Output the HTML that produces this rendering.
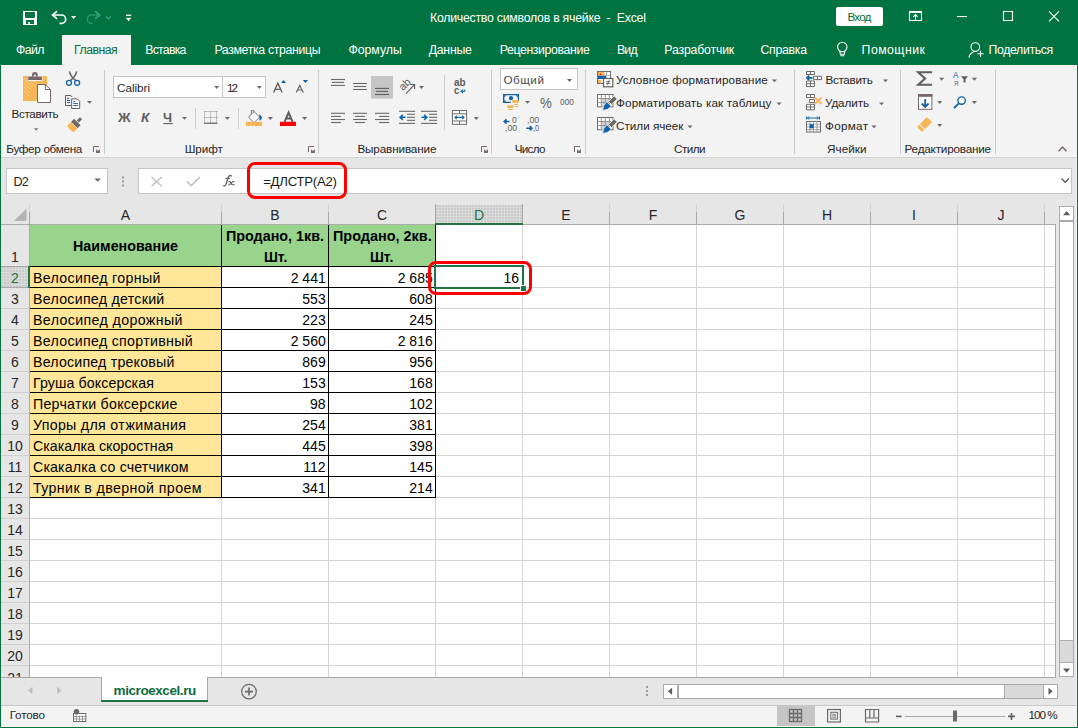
<!DOCTYPE html>
<html><head><meta charset="utf-8"><style>
html,body{margin:0;padding:0;}
body{width:1078px;height:728px;overflow:hidden;position:relative;background:#fff;font-family:"Liberation Sans",sans-serif;}
.a{position:absolute;}
.t{position:absolute;white-space:nowrap;transform-origin:0 0;}
</style></head><body>
<div class="a" style="left:0px;top:0px;width:1078px;height:65px;background:#007340"></div>
<div class="t" style="left:430.00px;top:11.85px;font-size:12.3px;line-height:12.3px;color:#fff;letter-spacing:-0.243px;">Количество символов в ячейке  -  Excel</div>
<div class="a" style="left:836px;top:7px;width:47px;height:19px;background:#fff;border-radius:2px"></div>
<div class="t" style="left:847.50px;top:10.65px;font-size:11.7px;line-height:11.7px;color:#007340;letter-spacing:-0.833px;">Вход</div>
<div class="a" style="left:62px;top:35px;width:69px;height:30px;background:#F3F3F3"></div>
<div class="t" style="left:16.00px;top:43.85px;font-size:12.3px;line-height:12.3px;color:#fff;letter-spacing:-0.617px;">Файл</div>
<div class="t" style="left:74.10px;top:43.85px;font-size:12.3px;line-height:12.3px;color:#0B6B3A;letter-spacing:-0.542px;">Главная</div>
<div class="t" style="left:145.30px;top:43.85px;font-size:12.3px;line-height:12.3px;color:#fff;letter-spacing:-0.775px;">Вставка</div>
<div class="t" style="left:214.40px;top:43.85px;font-size:12.3px;line-height:12.3px;color:#fff;letter-spacing:-0.339px;">Разметка страницы</div>
<div class="t" style="left:348.40px;top:43.85px;font-size:12.3px;line-height:12.3px;color:#fff;letter-spacing:-0.017px;">Формулы</div>
<div class="t" style="left:428.70px;top:43.85px;font-size:12.3px;line-height:12.3px;color:#fff;letter-spacing:-0.255px;">Данные</div>
<div class="t" style="left:499.70px;top:43.85px;font-size:12.3px;line-height:12.3px;color:#fff;letter-spacing:-0.377px;">Рецензирование</div>
<div class="t" style="left:616.90px;top:43.85px;font-size:12.3px;line-height:12.3px;color:#fff;letter-spacing:-0.725px;">Вид</div>
<div class="t" style="left:664.30px;top:43.85px;font-size:12.3px;line-height:12.3px;color:#fff;letter-spacing:-0.177px;">Разработчик</div>
<div class="t" style="left:760.50px;top:43.85px;font-size:12.3px;line-height:12.3px;color:#fff;letter-spacing:-0.275px;">Справка</div>
<div class="t" style="left:861.60px;top:43.85px;font-size:12.3px;line-height:12.3px;color:#fff;letter-spacing:0.450px;">Помощник</div>
<div class="t" style="left:988.50px;top:43.85px;font-size:12.3px;line-height:12.3px;color:#fff;letter-spacing:-0.353px;">Поделиться</div>
<svg class="a" style="left:0px;top:0px" width="1078" height="65" viewBox="0 0 1078 65">
<rect x="23" y="11" width="14" height="14" fill="#fff"/>
<path d="M25 12H35V17.2L34.2 18H25.8L25 17.2Z" fill="#007340"/>
<path d="M26 20H34V24H30V22H28.2V24H26Z" fill="#007340"/>
<path d="M57 11.2L52.6 15L57 18.8" stroke="#fff" stroke-width="1.7" fill="none"/>
<path d="M53.2 15H61.5A4.2 4.2 0 0 1 61.5 23.4H59.5" stroke="#fff" stroke-width="1.7" fill="none"/>
<path d="M71 16H76.2L73.6 19Z" fill="#fff"/>
<path d="M95 11.2L99.8 15L95 18.8" stroke="#36A27D" stroke-width="1.6" fill="none"/>
<path d="M99.4 15H91.5A4.2 4.2 0 0 0 91.5 23.4H93" stroke="#36A27D" stroke-width="1.5" fill="none" stroke-dasharray="1.6 0.6"/>
<path d="M106 16.5L108.5 18.8L111 16.3" stroke="#3FA683" stroke-width="1.1" fill="none"/>
<rect x="126" y="14.6" width="5.2" height="1.4" fill="#fff"/>
<path d="M125.8 17.8H131.4L128.6 21.2Z" fill="#fff"/>
<rect x="909.5" y="11.5" width="12" height="9" fill="none" stroke="#fff" stroke-width="1.1"/>
<rect x="909" y="11" width="13" height="2" fill="#fff"/>
<path d="M915.5 20.5V14.8M913.3 16.8L915.5 14.6L917.7 16.8" stroke="#fff" stroke-width="1.1" fill="none"/>
<rect x="957" y="16" width="10" height="1.1" fill="#fff"/>
<rect x="1003.5" y="11.5" width="9" height="9" fill="none" stroke="#fff" stroke-width="1.1"/>
<path d="M1049 11.3L1059 21.3M1059 11.3L1049 21.3" stroke="#fff" stroke-width="1.1" fill="none"/>
<circle cx="842.3" cy="47" r="4.7" fill="none" stroke="#fff" stroke-width="1.1"/>
<path d="M839.8 50.8L840.3 54.3H844.3L844.8 50.8M840.3 55.8H844.3" stroke="#fff" stroke-width="1.1" fill="none"/>
<circle cx="975.3" cy="47" r="4.3" fill="none" stroke="#fff" stroke-width="1.1"/>
<path d="M969 57.5A6.8 6.8 0 0 1 976.5 51.5" stroke="#fff" stroke-width="1.1" fill="none"/>
<path d="M977.4 53.8H983.7M980.5 50.8V57" stroke="#fff" stroke-width="1.1" fill="none"/>
</svg>
<div class="a" style="left:1px;top:65px;width:1075px;height:92px;background:#F3F3F3"></div>
<div class="a" style="left:1px;top:156px;width:1075px;height:1px;background:#F7F7F7"></div>
<div class="a" style="left:104px;top:70px;width:1px;height:84px;background:#C8C8C8"></div>
<div class="a" style="left:318px;top:70px;width:1px;height:84px;background:#C8C8C8"></div>
<div class="a" style="left:491px;top:70px;width:1px;height:84px;background:#C8C8C8"></div>
<div class="a" style="left:585px;top:70px;width:1px;height:84px;background:#C8C8C8"></div>
<div class="a" style="left:794px;top:70px;width:1px;height:84px;background:#C8C8C8"></div>
<div class="a" style="left:900px;top:70px;width:1px;height:84px;background:#C8C8C8"></div>
<div class="a" style="left:995px;top:70px;width:1px;height:84px;background:#C8C8C8"></div>
<div class="t" style="left:6.30px;top:142.65px;font-size:11.7px;line-height:11.7px;color:#262626;letter-spacing:-0.311px;">Буфер обмена</div>
<div class="t" style="left:184.70px;top:142.65px;font-size:11.7px;line-height:11.7px;color:#262626;letter-spacing:-0.050px;">Шрифт</div>
<div class="t" style="left:357.40px;top:142.65px;font-size:11.7px;line-height:11.7px;color:#262626;letter-spacing:-0.127px;">Выравнивание</div>
<div class="t" style="left:514.80px;top:142.65px;font-size:11.7px;line-height:11.7px;color:#262626;letter-spacing:-0.756px;">Число</div>
<div class="t" style="left:674.00px;top:142.65px;font-size:11.7px;line-height:11.7px;color:#262626;letter-spacing:-0.512px;">Стили</div>
<div class="t" style="left:827.00px;top:142.65px;font-size:11.7px;line-height:11.7px;color:#262626;letter-spacing:0.070px;">Ячейки</div>
<div class="t" style="left:904.50px;top:142.65px;font-size:11.7px;line-height:11.7px;color:#262626;letter-spacing:-0.187px;">Редактирование</div>
<div class="t" style="left:11.50px;top:107.65px;font-size:11.7px;line-height:11.7px;color:#262626;letter-spacing:-0.346px;">Вставить</div>
<div class="a" style="left:113px;top:76px;width:110px;height:22px;background:#fff;border:1px solid #C6C6C6;box-sizing:border-box"></div>
<div class="a" style="left:222px;top:76px;width:44px;height:22px;background:#fff;border:1px solid #C6C6C6;box-sizing:border-box"></div>
<div class="t" style="left:117.00px;top:81.65px;font-size:11.7px;line-height:11.7px;color:#262626;letter-spacing:-0.021px;">Calibri</div>
<div class="t" style="left:227.00px;top:81.65px;font-size:11.7px;line-height:11.7px;color:#262626;letter-spacing:-2.000px;">12</div>
<div class="a" style="left:500px;top:68px;width:78px;height:22px;background:#fff;border:1px solid #C6C6C6;box-sizing:border-box"></div>
<div class="t" style="left:616.00px;top:74.15px;font-size:11.7px;line-height:11.7px;color:#262626;letter-spacing:0.142px;">Условное форматирование</div>
<div class="t" style="left:616.00px;top:96.65px;font-size:11.7px;line-height:11.7px;color:#262626;letter-spacing:0.135px;">Форматировать как таблицу</div>
<div class="t" style="left:616.00px;top:120.45px;font-size:11.7px;line-height:11.7px;color:#262626;">Стили ячеек</div>
<div class="t" style="left:825.50px;top:73.65px;font-size:11.7px;line-height:11.7px;color:#262626;letter-spacing:-0.332px;">Вставить</div>
<div class="t" style="left:825.00px;top:96.65px;font-size:11.7px;line-height:11.7px;color:#262626;letter-spacing:-0.104px;">Удалить</div>
<div class="t" style="left:825.00px;top:120.15px;font-size:11.7px;line-height:11.7px;color:#262626;letter-spacing:0.300px;">Формат</div>
<svg class="a" style="left:0px;top:0px" width="1078" height="728" viewBox="0 0 1078 728">
<path d="M23 76H28V81H42.5V76H47V101H23Z" fill="#F8B556"/>
<path d="M24 83L30 89M24 87L30 93M24 91L30 97M26 81L32 87M30 81L36 87M34 81L37 84M24 79L27 82" stroke="#FBD68E" stroke-width="0.9" fill="none" opacity="0.8"/>
<path d="M28.2 76.5H41.9V80H28.2Z" fill="#76676B"/>
<path d="M32 76.6V75A2.9 2.9 0 0 1 37.8 75V76.6Z" fill="#76676B"/>
<circle cx="34.9" cy="75.6" r="1" fill="#F3F3F3"/>
<path d="M37.5 84.5H45.3L50.5 89.5V102.5H37.5Z" fill="#fff" stroke="#76676B" stroke-width="1"/>
<path d="M45.3 84.5V89.5H50.5" fill="none" stroke="#76676B" stroke-width="1"/>
<path d="M69.4 71.4Q70.2 76 75.8 80.6M76.7 71.4Q75.9 76 70.3 80.6" stroke="#6A6A6A" stroke-width="1.6" fill="none"/>
<circle cx="69" cy="82.8" r="2.5" fill="none" stroke="#1062A6" stroke-width="1.3"/>
<circle cx="77.1" cy="82.8" r="2.5" fill="none" stroke="#1062A6" stroke-width="1.3"/>
<path d="M65.5 95.5H70.8L72.2 97" fill="none" stroke="#5F5F5F" stroke-width="1"/>
<path d="M65.5 95.5V105.5H71.2" fill="none" stroke="#5F5F5F" stroke-width="1"/>
<path d="M71.7 98.8H77.2L79.7 101.3V108.5H71.7Z" fill="#fff" stroke="#5F5F5F" stroke-width="1"/>
<path d="M67 98.4H69.2M67 100.5H70M67 102.6H70M73.3 101.6H75.3M73.3 103.6H78M73.3 105.6H78" stroke="#1F5F9F" stroke-width="1" fill="none"/>
<path d="M86.9 101H92L89.45 103.8Z" fill="#6A6A6A"/>
<g transform="translate(75 124.3) rotate(45)">
<rect x="-1.5" y="-8.5" width="3" height="4.6" fill="#6A6A6A"/>
<rect x="-4.6" y="-3.3" width="9.2" height="4.3" fill="#6A6A6A"/>
<path d="M-4.6 1.2H4.6V6.5Q0 8.2 -4.6 6.5Z" fill="#F8B556"/>
</g>
<path d="M34 128.2H38.2L36.1 130.5Z" fill="#6A6A6A"/>
</svg>
<svg class="a" style="left:0px;top:0px" width="1078" height="728" viewBox="0 0 1078 728"><path d="M214.3 86H219.10000000000002L216.70000000000002 89Z" fill="#6A6A6A"/><path d="M257 86H261.8L259.4 89Z" fill="#6A6A6A"/><path d="M273.6 92.6L277.85 83.2L282.1 92.6M275.3 89.4H280.4" stroke="#5E5E5E" stroke-width="1.3" fill="none"/>
<path d="M281 82.9L283.55 79.9L286.1 82.9Z" fill="#1062A6"/>
<path d="M296.3 92.6L299.75 85.3L303.2 92.6M297.6 90H301.9" stroke="#5E5E5E" stroke-width="1.2" fill="none"/>
<path d="M302.8 79.9H308.1L305.45 83Z" fill="#1062A6"/>
<rect x="163.3" y="123" width="9.5" height="1.1" fill="#5E5E5E"/>
<rect x="195" y="108" width="1" height="21" fill="#D0D0D0"/>
<rect x="238" y="108" width="1" height="21" fill="#D0D0D0"/>
<path d="M204.5 111.5H217.5M204.5 111.5V123M216.5 111.5V123M210.5 111.5V123M204.5 117.5H217.5" stroke="#8A8A8A" stroke-width="1" stroke-dasharray="1 1" fill="none"/>
<rect x="204" y="122.6" width="13.4" height="1.2" fill="#5E5E5E"/>
<path d="M251.3 114V110.6H253.8V114" stroke="#76676B" stroke-width="0.9" fill="none"/>
<path d="M254.1 111.6L259.6 117.1L254.1 122.6L248.6 117.1Z" fill="#fff" stroke="#76676B" stroke-width="0.9"/>
<path d="M259.2 114.4Q262.4 116 261.8 118.2Q261.2 120.4 259.6 120.8Z" fill="#1062A6"/>
<rect x="246" y="121.8" width="16.1" height="4.1" fill="#F8B556"/>
<path d="M284.6 121.8L288.6 112.6L292.6 121.8M286.2 118.4H291" stroke="#5E5E5E" stroke-width="2" fill="none"/>
<rect x="280" y="121.8" width="16" height="4.2" fill="#FF0000"/>
<path d="M182 117H187L184.5 119.8Z" fill="#6A6A6A"/><path d="M224.8 117H230.0L227.4 119.8Z" fill="#6A6A6A"/><path d="M267.8 117H273.0L270.40000000000003 120Z" fill="#6A6A6A"/><path d="M302 117H307.2L304.6 120Z" fill="#6A6A6A"/></svg>
<div class="t" style="left:117.53px;top:110.90px;font-size:13px;line-height:13px;color:#5E5E5E;font-weight:bold;transform:scaleX(1.0750);">Ж</div>
<div class="t" style="left:141.00px;top:110.90px;font-size:13px;line-height:13px;color:#5E5E5E;font-weight:bold;transform:scaleX(1.0500);font-style:italic;">К</div>
<div class="t" style="left:163.30px;top:110.90px;font-size:13px;line-height:13px;color:#5E5E5E;font-weight:bold;transform:scaleX(0.9863);">Ч</div>
<svg class="a" style="left:0px;top:0px" width="1078" height="728" viewBox="0 0 1078 728"><rect x="371" y="76" width="22" height="22.6" fill="#C5C5C5"/><rect x="331" y="78.95" width="14.00" height="1.1" fill="#6A6A6A"/><rect x="332" y="81.85" width="12.00" height="1.1" fill="#6A6A6A"/><rect x="331" y="84.85" width="14.00" height="1.1" fill="#6A6A6A"/><rect x="353" y="82.95" width="14.00" height="1.1" fill="#6A6A6A"/><rect x="354" y="85.95" width="12.00" height="1.1" fill="#6A6A6A"/><rect x="353" y="88.95" width="14.00" height="1.1" fill="#6A6A6A"/><rect x="375" y="87.85" width="14.00" height="1.1" fill="#5E5E5E"/><rect x="376" y="90.85" width="12.00" height="1.1" fill="#5E5E5E"/><rect x="375" y="93.95" width="14.00" height="1.1" fill="#5E5E5E"/><rect x="331" y="112.75" width="14.00" height="1.1" fill="#6A6A6A"/><rect x="353" y="112.75" width="14.00" height="1.1" fill="#6A6A6A"/><rect x="375" y="112.75" width="14.20" height="1.1" fill="#6A6A6A"/><rect x="331" y="115.85" width="10.00" height="1.1" fill="#6A6A6A"/><rect x="355" y="115.85" width="10.00" height="1.1" fill="#6A6A6A"/><rect x="379" y="115.85" width="10.20" height="1.1" fill="#6A6A6A"/><rect x="331" y="118.95" width="14.00" height="1.1" fill="#6A6A6A"/><rect x="353" y="118.95" width="14.00" height="1.1" fill="#6A6A6A"/><rect x="375" y="118.95" width="14.20" height="1.1" fill="#6A6A6A"/><rect x="331" y="121.95" width="10.00" height="1.1" fill="#6A6A6A"/><rect x="355" y="121.95" width="10.00" height="1.1" fill="#6A6A6A"/><rect x="379" y="121.95" width="10.20" height="1.1" fill="#6A6A6A"/><rect x="399" y="110.75" width="16.10" height="1.1" fill="#6A6A6A"/><rect x="399" y="122.85" width="16.10" height="1.1" fill="#6A6A6A"/><rect x="421" y="110.75" width="16.10" height="1.1" fill="#6A6A6A"/><rect x="421" y="122.85" width="16.10" height="1.1" fill="#6A6A6A"/><rect x="407" y="113.75" width="8.10" height="1.1" fill="#6A6A6A"/><rect x="429" y="113.75" width="8.10" height="1.1" fill="#6A6A6A"/><rect x="407" y="116.75" width="8.10" height="1.1" fill="#6A6A6A"/><rect x="429" y="116.75" width="8.10" height="1.1" fill="#6A6A6A"/><rect x="407" y="119.75" width="8.10" height="1.1" fill="#6A6A6A"/><rect x="429" y="119.75" width="8.10" height="1.1" fill="#6A6A6A"/><path d="M405.5 117.3H400.5M402.8 114.8L400.2 117.3L402.8 119.8" stroke="#1062A6" stroke-width="1.6" fill="none"/>
<path d="M421.5 117.3H426.5M424.2 114.8L426.8 117.3L424.2 119.8" stroke="#1062A6" stroke-width="1.6" fill="none"/>
<path d="M406 93.6L414.4 84.6M410.2 84.5H414.6V88.9" stroke="#5E5E5E" stroke-width="1.1" fill="none"/>
<rect x="444" y="75" width="1" height="55" fill="#D0D0D0"/>
<path d="M464.8 89.6V91.3H461.4M462.9 89.6L461.1 91.3L462.9 93" stroke="#1062A6" stroke-width="1.1" fill="none"/>
<rect x="452.4" y="110.5" width="14.2" height="13.8" fill="#fff" stroke="#6A6A6A" stroke-width="1"/>
<path d="M452.4 113.8H466.6M452.4 121H466.6M459.5 110.5V113.8M459.5 121V124.3" stroke="#6A6A6A" stroke-width="1" fill="none"/>
<path d="M455 117.4H464M456.8 115.6L455 117.4L456.8 119.2M462.2 115.6L464 117.4L462.2 119.2" stroke="#1062A6" stroke-width="1.1" fill="none"/>
<path d="M419 86H424L421.5 88.9Z" fill="#6A6A6A"/><path d="M473.8 117H478.8L476.3 120Z" fill="#6A6A6A"/></svg>
<div class="t" style="left:398.5px;top:79px;font-size:11px;line-height:11px;color:#5E5E5E;transform:rotate(-45deg);transform-origin:6px 6px;">ab</div>
<div class="t" style="left:453.80px;top:77.15px;font-size:10.5px;line-height:10.5px;color:#5A5A5A;font-weight:bold;transform:scaleX(0.9469);">ab</div>
<div class="t" style="left:453.80px;top:84.55px;font-size:10.5px;line-height:10.5px;color:#5A5A5A;font-weight:bold;transform:scaleX(0.8851);">c</div>
<svg class="a" style="left:0px;top:0px" width="1078" height="728" viewBox="0 0 1078 728"><path d="M567 79H572L569.5 82Z" fill="#6A6A6A"/><path d="M503 94H519V101H517.8V95.3H504.3V101.7H510.8V103H503Z" fill="#1062A6"/>
<path d="M504.3 95.3H506.5L504.3 97.5ZM517.8 95.3H515.6L517.8 97.5ZM504.3 101.7V99.5L506.5 101.7Z" fill="#1062A6"/>
<circle cx="511" cy="98.2" r="2.1" fill="#1062A6"/>
<rect x="512.1" y="100" width="6.9" height="2.9" rx="1.2" fill="#F8B556"/>
<rect x="514.6" y="104" width="3.6" height="1" fill="#F8B556"/>
<rect x="515" y="106" width="3.2" height="1" fill="#F8B556"/>
<rect x="507" y="105.2" width="6.9" height="2.7" rx="1.2" fill="#F8B556"/>
<rect x="508.1" y="109" width="4.8" height="1.1" fill="#F8B556"/>
<path d="M509.5 121.5H504.2M506.5 119.3L504.2 121.5L506.5 123.7" stroke="#1062A6" stroke-width="1.6" fill="none"/>
<path d="M532 128.2H526.2M529.8 126L532 128.2L529.8 130.4" stroke="#1062A6" stroke-width="1.6" fill="none"/>
<path d="M525 101H530L527.5 103.8Z" fill="#6A6A6A"/></svg>
<div class="t" style="left:503.40px;top:73.65px;font-size:11.7px;line-height:11.7px;color:#4A4A4A;letter-spacing:0.525px;">Общий</div>
<div class="t" style="left:539.60px;top:95.55px;font-size:14.5px;line-height:14.5px;color:#5E5E5E;transform:scaleX(0.9165);">%</div>
<div class="t" style="left:560.00px;top:96.55px;font-size:9.5px;line-height:9.5px;color:#5E5E5E;transform:scaleX(0.8819);">000</div>
<div class="t" style="left:512.30px;top:116.10px;font-size:9px;line-height:9px;color:#5E5E5E;transform:scaleX(0.9400);">0</div>
<div class="t" style="left:505.00px;top:123.50px;font-size:9px;line-height:9px;color:#5E5E5E;transform:scaleX(0.9760);">,00</div>
<div class="t" style="left:527.00px;top:116.10px;font-size:9px;line-height:9px;color:#5E5E5E;transform:scaleX(0.9760);">,00</div>
<div class="t" style="left:533.00px;top:123.50px;font-size:9px;line-height:9px;color:#5E5E5E;transform:scaleX(0.8267);">,0</div>
<svg class="a" style="left:0px;top:0px" width="1078" height="728" viewBox="0 0 1078 728"><path d="M772 79.5H777L774.5 82.3Z" fill="#6A6A6A"/><path d="M776.5 102.5H781.5L779.0 105.3Z" fill="#6A6A6A"/><path d="M687.5 125.5H692.5L690.0 128.3Z" fill="#6A6A6A"/><rect x="597.5" y="71.5" width="13" height="12" fill="#fff" stroke="#6A6A6A" stroke-width="1"/>
<rect x="598" y="72" width="6.5" height="3.3" fill="#F8B556"/>
<rect x="598" y="75.8" width="8.3" height="3.2" fill="#1062A6"/>
<rect x="598" y="79.6" width="3.2" height="3.6" fill="#F8B556"/>
<path d="M606.5 72V75.5M598 75.5H610.5" stroke="#A0A0A0" stroke-width="0.8" fill="none"/>
<circle cx="600.6" cy="74.3" r="0.9" fill="#FF0000"/>
<rect x="603.5" y="78.5" width="9.3" height="8.3" fill="#fff" stroke="#5E5E5E" stroke-width="1.2"/>
<path d="M606 81.6H610.4M606 83.6H610.4M609.3 80.3L607.1 84.9" stroke="#5E5E5E" stroke-width="0.9" fill="none"/>
<rect x="597.5" y="94.5" width="15.5" height="12.3" fill="#fff" stroke="#6A6A6A" stroke-width="1"/>
<rect x="601.5" y="98.5" width="8" height="8" fill="#D4D4D4"/>
<path d="M601.3 94.5V106.8M605.3 94.5V106.8M609.3 94.5V106.8M597.5 98.5H613M597.5 102.5H613" stroke="#8A8A8A" stroke-width="0.9" fill="none"/>
<g transform="translate(609 104.1) rotate(45)">
<rect x="-2.2" y="-9.5" width="4.4" height="8" fill="#6A6A6A" stroke="#F3F3F3" stroke-width="0.8"/>
<path d="M-3.2 0H3.2Q3.6 5 0 9Q-3.6 5 -3.2 0Z" fill="#1062A6" stroke="#F3F3F3" stroke-width="0.7"/>
</g>
<rect x="597.5" y="117.5" width="15.5" height="12.3" fill="#fff" stroke="#6A6A6A" stroke-width="1"/>
<rect x="601.5" y="121.5" width="8" height="8" fill="#D4D4D4"/>
<path d="M601.3 117.5V129.79999999999998M605.3 117.5V129.79999999999998M609.3 117.5V129.79999999999998M597.5 121.5H613M597.5 125.5H613" stroke="#8A8A8A" stroke-width="0.9" fill="none"/>
<g transform="translate(609 127.1) rotate(45)">
<rect x="-2.2" y="-9.5" width="4.4" height="8" fill="#6A6A6A" stroke="#F3F3F3" stroke-width="0.8"/>
<path d="M-3.2 0H3.2Q3.6 5 0 9Q-3.6 5 -3.2 0Z" fill="#1062A6" stroke="#F3F3F3" stroke-width="0.7"/>
</g>
</svg>
<svg class="a" style="left:0px;top:0px" width="1078" height="728" viewBox="0 0 1078 728"><path d="M883 79.5H888L885.5 82.3Z" fill="#6A6A6A"/><path d="M879 102.5H884L881.5 105.3Z" fill="#6A6A6A"/><path d="M871.5 125.5H876.5L874.0 128.3Z" fill="#6A6A6A"/><path d="M806.5 71.5H814.5V74.5H806.5ZM810.5 71.5V74.5" stroke="#6A6A6A" stroke-width="1" fill="#fff"/>
<path d="M813.5 76.3H821.5V79.6H813.5ZM817.5 76.3V79.6" stroke="#6A6A6A" stroke-width="1" fill="#fff"/>
<path d="M806.5 81H814.5V86.5H806.5ZM806.5 83.7H814.5M810.5 81V86.5" stroke="#6A6A6A" stroke-width="1" fill="#fff"/>
<path d="M812.5 77.9H806.8M809.2 75.6L806.8 77.9L809.2 80.2" stroke="#1062A6" stroke-width="1.6" fill="none"/>
<path d="M806.5 94.5H814.5V97.5H806.5ZM810.5 94.5V97.5" stroke="#6A6A6A" stroke-width="1" fill="#fff"/>
<path d="M809.5 99.5H814.5V102.5H809.5Z" stroke="#6A6A6A" stroke-width="1" fill="#fff"/>
<path d="M806.5 104.3H814.5V109.8H806.5ZM806.5 107H814.5M810.5 104.3V109.8" stroke="#6A6A6A" stroke-width="1" fill="#fff"/>
<path d="M814.8 97.5L821.5 104M821.5 97.5L814.8 104" stroke="#F8B556" stroke-width="1.8" fill="none"/>
<path d="M806.5 116.5V119.5M819.5 116.5V119.5M807.5 118H818.5" stroke="#1062A6" stroke-width="1" fill="none"/>
<path d="M809.2 116.6L807.4 118L809.2 119.4M816.8 116.6L818.6 118L816.8 119.4" stroke="#1062A6" stroke-width="0.9" fill="none"/>
<rect x="806.5" y="121.5" width="14" height="10.5" fill="#fff" stroke="#6A6A6A" stroke-width="1"/>
<path d="M806.5 124.2H820.5M806.5 127H820.5M806.5 129.6H820.5M810 121.5V132M813.5 121.5V132M817 121.5V132" stroke="#8A8A8A" stroke-width="0.8" fill="none"/>
<rect x="809.6" y="124.3" width="4" height="4" fill="#1062A6"/>
</svg>
<svg class="a" style="left:0px;top:0px" width="1078" height="728" viewBox="0 0 1078 728"><path d="M939.1 77.8H944.2L941.65 80.8Z" fill="#6A6A6A"/><path d="M971.8 77.8H977.0L974.4 80.8Z" fill="#6A6A6A"/><path d="M937.2 100.9H942.2L939.7 103.9Z" fill="#6A6A6A"/><path d="M971.8 100.9H977.0L974.4 103.9Z" fill="#6A6A6A"/><path d="M937.2 124H942.2L939.7 127Z" fill="#6A6A6A"/><path d="M932.1 72.3H918.2L925.1 78.5L918.2 84.8H932.1" stroke="#5E5E5E" stroke-width="2.1" fill="none"/>
<path d="M961 76.2H968L965.5 79.3V82.5H963.5V79.3Z" fill="#5E5E5E"/>
<rect x="918.5" y="94.5" width="13.4" height="14.8" fill="#fff" stroke="#76676B" stroke-width="1"/>
<rect x="918" y="94" width="14.4" height="2.8" fill="#76676B"/>
<path d="M925.2 99V107M921.8 103.5L925.2 107L928.6 103.5" stroke="#1062A6" stroke-width="1.8" fill="none"/>
<circle cx="961.6" cy="100.6" r="3.7" fill="#fff" stroke="#1062A6" stroke-width="1.4"/>
<path d="M958.8 103.4L954 108.2" stroke="#1062A6" stroke-width="1.9" fill="none"/>
<g transform="translate(924.5 124.5) rotate(-45)"><rect x="-7" y="-3.6" width="14" height="7.2" fill="#F8B556"/><rect x="-3.8" y="-3.6" width="0.9" height="7.2" fill="#F3F3F3"/></g>
</svg>
<div class="t" style="left:953.10px;top:70.55px;font-size:8.5px;line-height:8.5px;color:#1062A6;transform:scaleX(0.9739);">A</div>
<div class="t" style="left:953.50px;top:80.20px;font-size:8px;line-height:8px;color:#76676B;transform:scaleX(0.7826);">Я</div>
<svg class="a" style="left:93px;top:145.5px" width="8" height="8" viewBox="0 0 8 8"><path d="M0.5 6V0.5H6" stroke="#76676B" stroke-width="1" fill="none"/><path d="M3 3.2L7 7H3Z M6.9 3V7H3Z" fill="#76676B"/></svg>
<svg class="a" style="left:308px;top:145.5px" width="8" height="8" viewBox="0 0 8 8"><path d="M0.5 6V0.5H6" stroke="#76676B" stroke-width="1" fill="none"/><path d="M3 3.2L7 7H3Z M6.9 3V7H3Z" fill="#76676B"/></svg>
<svg class="a" style="left:481px;top:145.5px" width="8" height="8" viewBox="0 0 8 8"><path d="M0.5 6V0.5H6" stroke="#76676B" stroke-width="1" fill="none"/><path d="M3 3.2L7 7H3Z M6.9 3V7H3Z" fill="#76676B"/></svg>
<svg class="a" style="left:574px;top:145.5px" width="8" height="8" viewBox="0 0 8 8"><path d="M0.5 6V0.5H6" stroke="#76676B" stroke-width="1" fill="none"/><path d="M3 3.2L7 7H3Z M6.9 3V7H3Z" fill="#76676B"/></svg>
<div class="a" style="left:1px;top:157px;width:1075px;height:47px;background:#E6E6E6"></div>
<div class="a" style="left:1px;top:157px;width:1075px;height:1px;background:#D2D2D2"></div>
<div class="a" style="left:6px;top:168px;width:102px;height:26px;background:#fff;border:1px solid #C6C6C6;box-sizing:border-box"></div>
<div class="t" style="left:13.40px;top:176.00px;font-size:12.6px;line-height:12.6px;color:#262626;letter-spacing:-0.825px;">D2</div>
<div class="a" style="left:138px;top:168px;width:934px;height:26px;background:#fff;border:1px solid #C6C6C6;box-sizing:border-box"></div>
<div class="t" style="left:263.20px;top:175.20px;font-size:13.2px;line-height:13.2px;color:#1A1A1A;letter-spacing:-0.272px;">=ДЛСТР(A2)</div>
<div class="a" style="left:247px;top:162px;width:100px;height:37px;border:3.2px solid #FF0000;border-radius:8px;box-sizing:border-box"></div>
<svg class="a" style="left:0px;top:0px" width="1078" height="728" viewBox="0 0 1078 728"><path d="M94.3 178.4H101.0L97.64999999999999 181.8Z" fill="#76676B"/><rect x="122" y="176.5" width="2" height="2" fill="#9A9A9A"/>
<rect x="122" y="180.5" width="2" height="2" fill="#9A9A9A"/>
<rect x="122" y="184.5" width="2" height="2" fill="#9A9A9A"/>
<path d="M151.5 177L161.8 186.3M161.8 177L151.5 186.3" stroke="#BDBDBD" stroke-width="1.3" fill="none"/>
<path d="M187.2 181.5L191.2 185.7L199.8 177" stroke="#BDBDBD" stroke-width="1.6" fill="none"/>
<path d="M1061.5 178.5L1065.2 182.2L1068.9 178.5" stroke="#5E5E5E" stroke-width="1.4" fill="none"/>
<path d="M1058.6 151.2L1062.5 147.1L1066.4 151.2" stroke="#76676B" stroke-width="1.5" fill="none"/>
</svg>
<svg class="a" style="left:0px;top:0px" width="1078" height="728" viewBox="0 0 1078 728"><path d="M231.6 176.2Q230 174.6 228.6 176.6L225.9 184.4Q225 186.6 223.2 185.5" stroke="#5E5E5E" stroke-width="1.3" fill="none"/>
<path d="M225.2 178.4H229.9" stroke="#5E5E5E" stroke-width="1.1" fill="none"/>
<path d="M228.4 182Q229.8 180.9 230.6 182.4L231.8 184.3Q232.6 185.2 234.3 184.2M234.6 181.3Q233 181.4 231.2 183L229.6 184.7Q229 185.2 228.3 184.8" stroke="#5E5E5E" stroke-width="1.1" fill="none"/></svg>
<div class="a" style="left:1px;top:204px;width:1055px;height:21px;background:#E6E6E6"></div>
<div class="a" style="left:1px;top:204px;width:28px;height:473px;background:#E6E6E6"></div>
<div class="a" style="left:30px;top:225px;width:1026px;height:452px;background:#fff"></div>
<div class="a" style="left:30px;top:225px;width:191px;height:41px;background:#98D48C"></div>
<div class="a" style="left:222px;top:225px;width:106px;height:41px;background:#98D48C"></div>
<div class="a" style="left:329px;top:225px;width:106px;height:41px;background:#98D48C"></div>
<div class="a" style="left:30px;top:267px;width:191px;height:20px;background:#FFE699"></div>
<div class="a" style="left:30px;top:288px;width:191px;height:20px;background:#FFE699"></div>
<div class="a" style="left:30px;top:309px;width:191px;height:20px;background:#FFE699"></div>
<div class="a" style="left:30px;top:330px;width:191px;height:20px;background:#FFE699"></div>
<div class="a" style="left:30px;top:351px;width:191px;height:20px;background:#FFE699"></div>
<div class="a" style="left:30px;top:372px;width:191px;height:20px;background:#FFE699"></div>
<div class="a" style="left:30px;top:393px;width:191px;height:20px;background:#FFE699"></div>
<div class="a" style="left:30px;top:414px;width:191px;height:20px;background:#FFE699"></div>
<div class="a" style="left:30px;top:435px;width:191px;height:20px;background:#FFE699"></div>
<div class="a" style="left:30px;top:456px;width:191px;height:20px;background:#FFE699"></div>
<div class="a" style="left:30px;top:477px;width:191px;height:20px;background:#FFE699"></div>
<div class="a" style="left:221px;top:225px;width:1px;height:452px;background:#D4D4D4"></div>
<div class="a" style="left:328px;top:225px;width:1px;height:452px;background:#D4D4D4"></div>
<div class="a" style="left:435px;top:225px;width:1px;height:452px;background:#D4D4D4"></div>
<div class="a" style="left:522px;top:225px;width:1px;height:452px;background:#D4D4D4"></div>
<div class="a" style="left:609px;top:225px;width:1px;height:452px;background:#D4D4D4"></div>
<div class="a" style="left:696px;top:225px;width:1px;height:452px;background:#D4D4D4"></div>
<div class="a" style="left:783px;top:225px;width:1px;height:452px;background:#D4D4D4"></div>
<div class="a" style="left:870px;top:225px;width:1px;height:452px;background:#D4D4D4"></div>
<div class="a" style="left:957px;top:225px;width:1px;height:452px;background:#D4D4D4"></div>
<div class="a" style="left:1044px;top:225px;width:1px;height:452px;background:#D4D4D4"></div>
<div class="a" style="left:30px;top:266px;width:1026px;height:1px;background:#D4D4D4"></div>
<div class="a" style="left:30px;top:287px;width:1026px;height:1px;background:#D4D4D4"></div>
<div class="a" style="left:30px;top:308px;width:1026px;height:1px;background:#D4D4D4"></div>
<div class="a" style="left:30px;top:329px;width:1026px;height:1px;background:#D4D4D4"></div>
<div class="a" style="left:30px;top:350px;width:1026px;height:1px;background:#D4D4D4"></div>
<div class="a" style="left:30px;top:371px;width:1026px;height:1px;background:#D4D4D4"></div>
<div class="a" style="left:30px;top:392px;width:1026px;height:1px;background:#D4D4D4"></div>
<div class="a" style="left:30px;top:413px;width:1026px;height:1px;background:#D4D4D4"></div>
<div class="a" style="left:30px;top:434px;width:1026px;height:1px;background:#D4D4D4"></div>
<div class="a" style="left:30px;top:455px;width:1026px;height:1px;background:#D4D4D4"></div>
<div class="a" style="left:30px;top:476px;width:1026px;height:1px;background:#D4D4D4"></div>
<div class="a" style="left:30px;top:497px;width:1026px;height:1px;background:#D4D4D4"></div>
<div class="a" style="left:30px;top:518px;width:1026px;height:1px;background:#D4D4D4"></div>
<div class="a" style="left:30px;top:539px;width:1026px;height:1px;background:#D4D4D4"></div>
<div class="a" style="left:30px;top:560px;width:1026px;height:1px;background:#D4D4D4"></div>
<div class="a" style="left:30px;top:581px;width:1026px;height:1px;background:#D4D4D4"></div>
<div class="a" style="left:30px;top:602px;width:1026px;height:1px;background:#D4D4D4"></div>
<div class="a" style="left:30px;top:623px;width:1026px;height:1px;background:#D4D4D4"></div>
<div class="a" style="left:30px;top:644px;width:1026px;height:1px;background:#D4D4D4"></div>
<div class="a" style="left:30px;top:665px;width:1026px;height:1px;background:#D4D4D4"></div>
<div class="a" style="left:29px;top:204px;width:1px;height:20px;background:#D2D2D2"></div>
<div class="a" style="left:29px;top:212px;width:1px;height:12px;background:#A8A8A8"></div>
<div class="a" style="left:221px;top:204px;width:1px;height:20px;background:#D2D2D2"></div>
<div class="a" style="left:221px;top:212px;width:1px;height:12px;background:#A8A8A8"></div>
<div class="a" style="left:328px;top:204px;width:1px;height:20px;background:#D2D2D2"></div>
<div class="a" style="left:328px;top:212px;width:1px;height:12px;background:#A8A8A8"></div>
<div class="a" style="left:435px;top:204px;width:1px;height:20px;background:#D2D2D2"></div>
<div class="a" style="left:435px;top:212px;width:1px;height:12px;background:#A8A8A8"></div>
<div class="a" style="left:522px;top:204px;width:1px;height:20px;background:#D2D2D2"></div>
<div class="a" style="left:522px;top:212px;width:1px;height:12px;background:#A8A8A8"></div>
<div class="a" style="left:609px;top:204px;width:1px;height:20px;background:#D2D2D2"></div>
<div class="a" style="left:609px;top:212px;width:1px;height:12px;background:#A8A8A8"></div>
<div class="a" style="left:696px;top:204px;width:1px;height:20px;background:#D2D2D2"></div>
<div class="a" style="left:696px;top:212px;width:1px;height:12px;background:#A8A8A8"></div>
<div class="a" style="left:783px;top:204px;width:1px;height:20px;background:#D2D2D2"></div>
<div class="a" style="left:783px;top:212px;width:1px;height:12px;background:#A8A8A8"></div>
<div class="a" style="left:870px;top:204px;width:1px;height:20px;background:#D2D2D2"></div>
<div class="a" style="left:870px;top:212px;width:1px;height:12px;background:#A8A8A8"></div>
<div class="a" style="left:957px;top:204px;width:1px;height:20px;background:#D2D2D2"></div>
<div class="a" style="left:957px;top:212px;width:1px;height:12px;background:#A8A8A8"></div>
<div class="a" style="left:1044px;top:204px;width:1px;height:20px;background:#D2D2D2"></div>
<div class="a" style="left:1044px;top:212px;width:1px;height:12px;background:#A8A8A8"></div>
<div class="a" style="left:1px;top:224px;width:1055px;height:1px;background:#ABABAB"></div>
<div class="a" style="left:1px;top:266px;width:28px;height:1px;background:#D0D0D0"></div>
<div class="a" style="left:1px;top:287px;width:28px;height:1px;background:#D0D0D0"></div>
<div class="a" style="left:1px;top:308px;width:28px;height:1px;background:#D0D0D0"></div>
<div class="a" style="left:1px;top:329px;width:28px;height:1px;background:#D0D0D0"></div>
<div class="a" style="left:1px;top:350px;width:28px;height:1px;background:#D0D0D0"></div>
<div class="a" style="left:1px;top:371px;width:28px;height:1px;background:#D0D0D0"></div>
<div class="a" style="left:1px;top:392px;width:28px;height:1px;background:#D0D0D0"></div>
<div class="a" style="left:1px;top:413px;width:28px;height:1px;background:#D0D0D0"></div>
<div class="a" style="left:1px;top:434px;width:28px;height:1px;background:#D0D0D0"></div>
<div class="a" style="left:1px;top:455px;width:28px;height:1px;background:#D0D0D0"></div>
<div class="a" style="left:1px;top:476px;width:28px;height:1px;background:#D0D0D0"></div>
<div class="a" style="left:1px;top:497px;width:28px;height:1px;background:#D0D0D0"></div>
<div class="a" style="left:1px;top:518px;width:28px;height:1px;background:#D0D0D0"></div>
<div class="a" style="left:1px;top:539px;width:28px;height:1px;background:#D0D0D0"></div>
<div class="a" style="left:1px;top:560px;width:28px;height:1px;background:#D0D0D0"></div>
<div class="a" style="left:1px;top:581px;width:28px;height:1px;background:#D0D0D0"></div>
<div class="a" style="left:1px;top:602px;width:28px;height:1px;background:#D0D0D0"></div>
<div class="a" style="left:1px;top:623px;width:28px;height:1px;background:#D0D0D0"></div>
<div class="a" style="left:1px;top:644px;width:28px;height:1px;background:#D0D0D0"></div>
<div class="a" style="left:1px;top:665px;width:28px;height:1px;background:#D0D0D0"></div>
<div class="a" style="left:29px;top:224px;width:1px;height:453px;background:#ABABAB"></div>
<svg class="a" style="left:0px;top:0px" width="1078" height="728" viewBox="0 0 1078 728"><path d="M26.5 208.6V221H14Z" fill="#B4B4B4"/></svg>
<div class="a" style="left:436px;top:205px;width:86px;height:18px;background-color:#DADADA;background-image:radial-gradient(circle at 1px 1px,#CACACA 0.7px,transparent 1px);background-size:3px 3px;"></div>
<div class="a" style="left:435px;top:204px;width:1px;height:20px;background:#A8A8A8"></div>
<div class="a" style="left:522px;top:204px;width:1px;height:20px;background:#A8A8A8"></div>
<div class="a" style="left:435px;top:223px;width:88px;height:2px;background:#217346"></div>
<div class="a" style="left:1px;top:267px;width:28px;height:20px;background-color:#DADADA;background-image:radial-gradient(circle at 1px 1px,#CACACA 0.7px,transparent 1px);background-size:3px 3px;"></div>
<div class="a" style="left:1px;top:266px;width:28px;height:1px;background:#A8A8A8"></div>
<div class="a" style="left:1px;top:287px;width:28px;height:1px;background:#A8A8A8"></div>
<div class="a" style="left:28px;top:266px;width:2px;height:22px;background:#217346"></div>
<div class="a" style="left:221px;top:225px;width:1px;height:273px;background:#000"></div>
<div class="a" style="left:328px;top:225px;width:1px;height:273px;background:#000"></div>
<div class="a" style="left:435px;top:225px;width:1px;height:273px;background:#000"></div>
<div class="a" style="left:30px;top:266px;width:406px;height:1px;background:#000"></div>
<div class="a" style="left:30px;top:287px;width:406px;height:1px;background:#000"></div>
<div class="a" style="left:30px;top:308px;width:406px;height:1px;background:#000"></div>
<div class="a" style="left:30px;top:329px;width:406px;height:1px;background:#000"></div>
<div class="a" style="left:30px;top:350px;width:406px;height:1px;background:#000"></div>
<div class="a" style="left:30px;top:371px;width:406px;height:1px;background:#000"></div>
<div class="a" style="left:30px;top:392px;width:406px;height:1px;background:#000"></div>
<div class="a" style="left:30px;top:413px;width:406px;height:1px;background:#000"></div>
<div class="a" style="left:30px;top:434px;width:406px;height:1px;background:#000"></div>
<div class="a" style="left:30px;top:455px;width:406px;height:1px;background:#000"></div>
<div class="a" style="left:30px;top:476px;width:406px;height:1px;background:#000"></div>
<div class="a" style="left:30px;top:497px;width:406px;height:1px;background:#000"></div>
<div class="t" style="left:120.81px;top:208.00px;font-size:14px;line-height:14px;color:#262626;">A</div>
<div class="t" style="left:270.31px;top:208.00px;font-size:14px;line-height:14px;color:#262626;">B</div>
<div class="t" style="left:376.94px;top:208.00px;font-size:14px;line-height:14px;color:#262626;">C</div>
<div class="t" style="left:473.94px;top:208.00px;font-size:14px;line-height:14px;color:#217346;">D</div>
<div class="t" style="left:561.31px;top:208.00px;font-size:14px;line-height:14px;color:#262626;">E</div>
<div class="t" style="left:648.75px;top:208.00px;font-size:14px;line-height:14px;color:#262626;">F</div>
<div class="t" style="left:734.56px;top:208.00px;font-size:14px;line-height:14px;color:#262626;">G</div>
<div class="t" style="left:821.94px;top:208.00px;font-size:14px;line-height:14px;color:#262626;">H</div>
<div class="t" style="left:912.06px;top:208.00px;font-size:14px;line-height:14px;color:#262626;">I</div>
<div class="t" style="left:997.50px;top:208.00px;font-size:14px;line-height:14px;color:#262626;">J</div>
<div class="t" style="left:11.12px;top:250.00px;font-size:14px;line-height:14px;color:#262626;">1</div>
<div class="t" style="left:11.12px;top:271.00px;font-size:14px;line-height:14px;color:#217346;">2</div>
<div class="t" style="left:11.12px;top:292.00px;font-size:14px;line-height:14px;color:#262626;">3</div>
<div class="t" style="left:11.12px;top:313.00px;font-size:14px;line-height:14px;color:#262626;">4</div>
<div class="t" style="left:11.12px;top:334.00px;font-size:14px;line-height:14px;color:#262626;">5</div>
<div class="t" style="left:11.12px;top:355.00px;font-size:14px;line-height:14px;color:#262626;">6</div>
<div class="t" style="left:11.12px;top:376.00px;font-size:14px;line-height:14px;color:#262626;">7</div>
<div class="t" style="left:11.12px;top:397.00px;font-size:14px;line-height:14px;color:#262626;">8</div>
<div class="t" style="left:11.12px;top:418.00px;font-size:14px;line-height:14px;color:#262626;">9</div>
<div class="t" style="left:7.19px;top:439.00px;font-size:14px;line-height:14px;color:#262626;">10</div>
<div class="t" style="left:7.75px;top:460.00px;font-size:14px;line-height:14px;color:#262626;">11</div>
<div class="t" style="left:7.19px;top:481.00px;font-size:14px;line-height:14px;color:#262626;">12</div>
<div class="t" style="left:7.19px;top:502.00px;font-size:14px;line-height:14px;color:#262626;">13</div>
<div class="t" style="left:7.19px;top:523.00px;font-size:14px;line-height:14px;color:#262626;">14</div>
<div class="t" style="left:7.19px;top:544.00px;font-size:14px;line-height:14px;color:#262626;">15</div>
<div class="t" style="left:7.19px;top:565.00px;font-size:14px;line-height:14px;color:#262626;">16</div>
<div class="t" style="left:7.19px;top:586.00px;font-size:14px;line-height:14px;color:#262626;">17</div>
<div class="t" style="left:7.19px;top:607.00px;font-size:14px;line-height:14px;color:#262626;">18</div>
<div class="t" style="left:7.19px;top:628.00px;font-size:14px;line-height:14px;color:#262626;">19</div>
<div class="t" style="left:7.19px;top:649.00px;font-size:14px;line-height:14px;color:#262626;">20</div>
<div class="t" style="left:7.19px;top:671.00px;font-size:14px;line-height:14px;color:#262626;">21</div>
<div class="t" style="left:73.40px;top:239.00px;font-size:14px;line-height:14px;color:#000;font-weight:bold;transform:scaleX(1.0219);">Наименование</div>
<div class="t" style="left:226.00px;top:229.20px;font-size:14px;line-height:14px;color:#000;font-weight:bold;transform:scaleX(1.0235);">Продано, 1кв.</div>
<div class="t" style="left:263.50px;top:250.30px;font-size:14px;line-height:14px;color:#000;font-weight:bold;transform:scaleX(0.9862);">Шт.</div>
<div class="t" style="left:332.50px;top:229.20px;font-size:14px;line-height:14px;color:#000;font-weight:bold;transform:scaleX(1.0308);">Продано, 2кв.</div>
<div class="t" style="left:370.00px;top:250.30px;font-size:14px;line-height:14px;color:#000;font-weight:bold;transform:scaleX(0.9862);">Шт.</div>
<div class="t" style="left:33.00px;top:270.90px;font-size:14.2px;line-height:14.2px;color:#000;letter-spacing:0.335px;">Велосипед горный</div>
<div class="t" style="left:290.70px;top:271.00px;font-size:14px;line-height:14px;color:#000;">2 441</div>
<div class="t" style="left:397.70px;top:271.00px;font-size:14px;line-height:14px;color:#000;">2 685</div>
<div class="t" style="left:33.00px;top:291.90px;font-size:14.2px;line-height:14.2px;color:#000;letter-spacing:0.275px;">Велосипед детский</div>
<div class="t" style="left:302.32px;top:292.00px;font-size:14px;line-height:14px;color:#000;">553</div>
<div class="t" style="left:409.32px;top:292.00px;font-size:14px;line-height:14px;color:#000;">608</div>
<div class="t" style="left:33.00px;top:312.90px;font-size:14.2px;line-height:14.2px;color:#000;letter-spacing:0.381px;">Велосипед дорожный</div>
<div class="t" style="left:302.32px;top:313.00px;font-size:14px;line-height:14px;color:#000;">223</div>
<div class="t" style="left:409.32px;top:313.00px;font-size:14px;line-height:14px;color:#000;">245</div>
<div class="t" style="left:33.00px;top:333.90px;font-size:14.2px;line-height:14.2px;color:#000;letter-spacing:0.300px;">Велосипед спортивный</div>
<div class="t" style="left:290.70px;top:334.00px;font-size:14px;line-height:14px;color:#000;">2 560</div>
<div class="t" style="left:397.70px;top:334.00px;font-size:14px;line-height:14px;color:#000;">2 816</div>
<div class="t" style="left:33.00px;top:354.90px;font-size:14.2px;line-height:14.2px;color:#000;letter-spacing:0.200px;">Велосипед трековый</div>
<div class="t" style="left:302.32px;top:355.00px;font-size:14px;line-height:14px;color:#000;">869</div>
<div class="t" style="left:409.32px;top:355.00px;font-size:14px;line-height:14px;color:#000;">956</div>
<div class="t" style="left:33.00px;top:375.90px;font-size:14.2px;line-height:14.2px;color:#000;letter-spacing:0.100px;">Груша боксерская</div>
<div class="t" style="left:302.32px;top:376.00px;font-size:14px;line-height:14px;color:#000;">153</div>
<div class="t" style="left:409.32px;top:376.00px;font-size:14px;line-height:14px;color:#000;">168</div>
<div class="t" style="left:33.00px;top:396.90px;font-size:14.2px;line-height:14.2px;color:#000;letter-spacing:0.264px;">Перчатки боксерские</div>
<div class="t" style="left:310.07px;top:397.00px;font-size:14px;line-height:14px;color:#000;">98</div>
<div class="t" style="left:409.32px;top:397.00px;font-size:14px;line-height:14px;color:#000;">102</div>
<div class="t" style="left:33.00px;top:417.90px;font-size:14.2px;line-height:14.2px;color:#000;letter-spacing:0.312px;">Упоры для отжимания</div>
<div class="t" style="left:302.32px;top:418.00px;font-size:14px;line-height:14px;color:#000;">254</div>
<div class="t" style="left:409.32px;top:418.00px;font-size:14px;line-height:14px;color:#000;">381</div>
<div class="t" style="left:33.00px;top:438.90px;font-size:14.2px;line-height:14.2px;color:#000;letter-spacing:0.022px;">Скакалка скоростная</div>
<div class="t" style="left:302.32px;top:439.00px;font-size:14px;line-height:14px;color:#000;">445</div>
<div class="t" style="left:409.32px;top:439.00px;font-size:14px;line-height:14px;color:#000;">398</div>
<div class="t" style="left:33.00px;top:459.90px;font-size:14.2px;line-height:14.2px;color:#000;letter-spacing:0.155px;">Скакалка со счетчиком</div>
<div class="t" style="left:303.32px;top:460.00px;font-size:14px;line-height:14px;color:#000;">112</div>
<div class="t" style="left:409.32px;top:460.00px;font-size:14px;line-height:14px;color:#000;">145</div>
<div class="t" style="left:33.00px;top:480.90px;font-size:14.2px;line-height:14.2px;color:#000;letter-spacing:0.392px;">Турник в дверной проем</div>
<div class="t" style="left:302.32px;top:481.00px;font-size:14px;line-height:14px;color:#000;">341</div>
<div class="t" style="left:409.32px;top:481.00px;font-size:14px;line-height:14px;color:#000;">214</div>
<div class="a" style="left:434px;top:265px;width:90px;height:24px;border:2px solid #217346;box-sizing:border-box"></div>
<div class="a" style="left:520px;top:285px;width:5px;height:5px;background:#217346;border:1px solid #fff;box-sizing:content-box"></div>
<div class="t" style="left:503.48px;top:271.00px;font-size:14px;line-height:14px;color:#000;">16</div>
<div class="a" style="left:428px;top:261px;width:104px;height:34px;border:3.2px solid #FF0000;border-radius:8px;box-sizing:border-box"></div>
<div class="a" style="left:1056px;top:204px;width:20px;height:473px;background:#E6E6E6"></div>
<div class="a" style="left:1059px;top:206px;width:15px;height:471px;background:#fff;border:1px solid #ABABAB;box-sizing:border-box"></div>
<div class="a" style="left:1060px;top:220px;width:13px;height:2px;background:#ABABAB"></div>
<div class="a" style="left:1060px;top:640px;width:13px;height:23px;background:#DADADA"></div>
<div class="a" style="left:1060px;top:640px;width:13px;height:1px;background:#ABABAB"></div>
<div class="a" style="left:1060px;top:662px;width:13px;height:1px;background:#ABABAB"></div>
<div class="a" style="left:1055px;top:224px;width:1px;height:453px;background:#A8A8A8"></div>
<svg class="a" style="left:0px;top:0px" width="1078" height="728" viewBox="0 0 1078 728"><path d="M1063 215.2H1070.2L1066.6 211Z" fill="#5E5E5E"/><path d="M1063 668.5H1070.2L1066.6 672.7Z" fill="#5E5E5E"/></svg>
<div class="a" style="left:1px;top:677px;width:1075px;height:28px;background:#E6E6E6"></div>
<div class="a" style="left:1px;top:677px;width:100px;height:1px;background:#A8A8A8"></div>
<div class="a" style="left:208px;top:677px;width:848px;height:1px;background:#A8A8A8"></div>
<div class="a" style="left:101px;top:677px;width:107px;height:24px;background:#fff;border:1px solid #A8A8A8;border-top:none;box-sizing:border-box"></div>
<div class="a" style="left:101px;top:700px;width:107px;height:2px;background:#217346"></div>
<div class="t" style="left:113.60px;top:683.75px;font-size:13.5px;line-height:13.5px;color:#0E6B3C;font-weight:bold;letter-spacing:-0.429px;">microexcel.ru</div>
<svg class="a" style="left:0px;top:0px" width="1078" height="728" viewBox="0 0 1078 728"><path d="M32.4 686.8V694L28 690.4Z" fill="#BDBDBD"/><path d="M57.1 686.8V694L61.5 690.4Z" fill="#BDBDBD"/>
<circle cx="249" cy="691.6" r="7.3" fill="none" stroke="#6A6A6A" stroke-width="1.2"/>
<path d="M249 687.6V695.6M245 691.6H253" stroke="#6A6A6A" stroke-width="1.6" fill="none"/>
<rect x="646" y="686" width="2" height="2" fill="#9A9A9A"/><rect x="646" y="690" width="2" height="2" fill="#9A9A9A"/><rect x="646" y="694" width="2" height="2" fill="#9A9A9A"/>
</svg>
<div class="a" style="left:663px;top:684px;width:395px;height:15px;background:#fff;border:1px solid #ABABAB;box-sizing:border-box"></div>
<div class="a" style="left:677px;top:684px;width:2px;height:15px;background:#ABABAB"></div>
<div class="a" style="left:1004px;top:685px;width:39px;height:13px;background:#DADADA"></div>
<div class="a" style="left:1004px;top:684px;width:1px;height:15px;background:#ABABAB"></div>
<div class="a" style="left:1043px;top:684px;width:1px;height:15px;background:#ABABAB"></div>
<svg class="a" style="left:0px;top:0px" width="1078" height="728" viewBox="0 0 1078 728"><path d="M672.1 687.8V694.9L667.9 691.35Z" fill="#5E5E5E"/><path d="M1048.5 687.8V694.9L1052.7 691.35Z" fill="#5E5E5E"/></svg>
<div class="a" style="left:1px;top:705px;width:1076px;height:22px;background:#F3F3F3"></div>
<div class="a" style="left:1px;top:705px;width:1076px;height:1px;background:#C8C8C8"></div>
<div class="t" style="left:9.70px;top:708.65px;font-size:11.7px;line-height:11.7px;color:#262626;letter-spacing:-0.165px;">Готово</div>
<div class="a" style="left:777px;top:706px;width:38px;height:21px;background:#C5C5C5"></div>
<svg class="a" style="left:0px;top:0px" width="1078" height="728" viewBox="0 0 1078 728"><rect x="73.5" y="713.5" width="12.3" height="8" fill="#fff" stroke="#6A6A6A" stroke-width="1"/>
<path d="M76.5 715.5V721.5M79.5 715.5V721.5M82.5 715.5V721.5M73.5 716.5H85.8M73.5 719H85.8" stroke="#8A8A8A" stroke-width="0.8" fill="none"/>
<circle cx="76.5" cy="711.8" r="2.8" fill="#6A6A6A"/>
<rect x="789.5" y="709.5" width="12" height="12" fill="none" stroke="#6A6A6A" stroke-width="1.3"/>
<path d="M793.5 709.5V721.5M797.5 709.5V721.5M789.5 713.5H801.5M789.5 717.5H801.5" stroke="#6A6A6A" stroke-width="1.3" fill="none"/>
<rect x="827.6" y="709.5" width="12.8" height="12.5" fill="none" stroke="#6A6A6A" stroke-width="1.2"/>
<rect x="830.8" y="712.3" width="6.6" height="6.8" fill="none" stroke="#6A6A6A" stroke-width="1"/>
<path d="M832.3 714.3H836M832.3 715.8H836M832.3 717.3H836" stroke="#6A6A6A" stroke-width="0.8" fill="none"/>
<path d="M865.5 709.5H878.6V722H865.5ZM865.5 718H874V709.5M869.8 709.5V718M874 718H878.6" stroke="#6A6A6A" stroke-width="1.2" fill="none"/>
<rect x="896" y="715.6" width="5.5" height="1.6" fill="#5E5E5E"/>
<rect x="905" y="716" width="100" height="1" fill="#A8A8A8"/>
<rect x="953" y="710.5" width="4" height="11" fill="#6A6A6A"/>
<path d="M1008 716.4H1015M1011.5 712.9V719.9" stroke="#5E5E5E" stroke-width="1.6" fill="none"/>
</svg>
<div class="t" style="left:1028.60px;top:708.65px;font-size:11.7px;line-height:11.7px;color:#262626;letter-spacing:-1.031px;">100 %</div>
<div class="a" style="left:0px;top:0px;width:1px;height:728px;background:#007340"></div>
<div class="a" style="left:1076px;top:65px;width:1px;height:663px;background:#F6F6F6"></div>
<div class="a" style="left:1077px;top:0px;width:1px;height:728px;background:#007340"></div>
<div class="a" style="left:1px;top:726px;width:1076px;height:1px;background:#F6F6F6"></div>
<div class="a" style="left:0px;top:727px;width:1078px;height:1px;background:#007340"></div>
</body></html>
